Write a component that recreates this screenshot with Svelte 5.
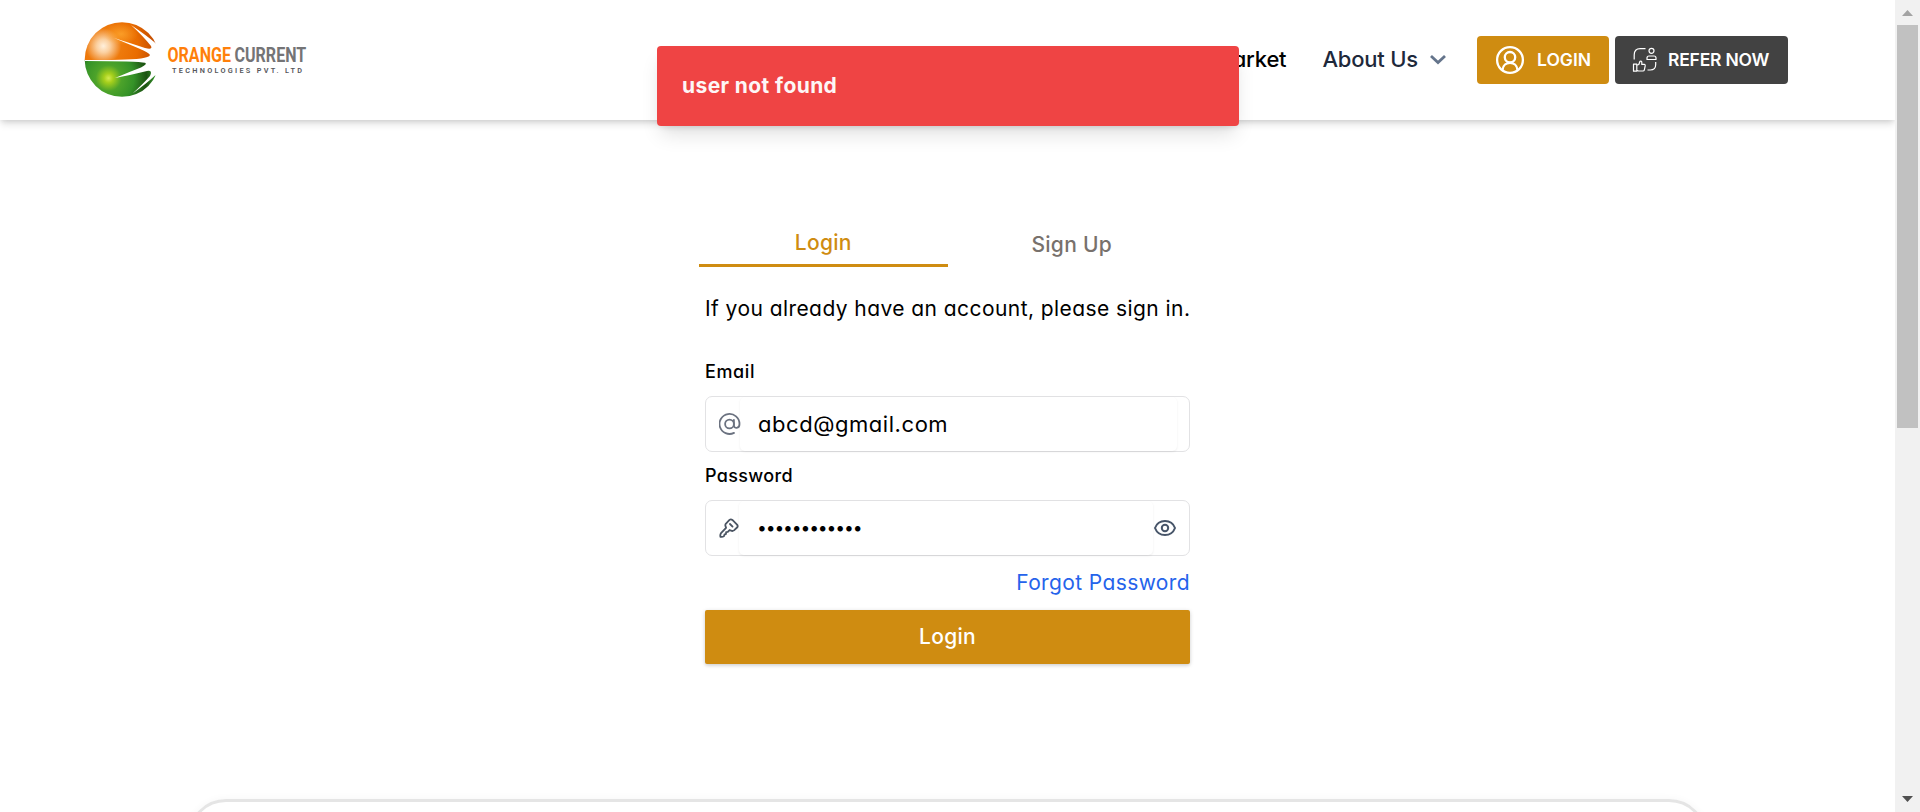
<script>
  const tabs = [
    { label: 'Login', active: true },
    { label: 'Sign Up', active: false },
  ];
  const email = 'abcd@gmail.com';
  const password = '•'.repeat(12);
</script>

<div class="window">
  <div class="page">
    <header>
      <svg class="logo" width="240" height="90" viewBox="75 15 240 90">
        <defs>
          <radialGradient id="og" cx="0.25" cy="0.32" r="0.75">
            <stop offset="0" stop-color="#fff0dc" />
            <stop offset="0.12" stop-color="#fbd0a0" />
            <stop offset="0.32" stop-color="#ee7a0c" />
            <stop offset="0.62" stop-color="#e96c00" />
            <stop offset="1" stop-color="#b84300" />
          </radialGradient>
          <radialGradient id="gg" cx="0.32" cy="0.75" r="0.62">
            <stop offset="0" stop-color="#d3ea50" />
            <stop offset="0.1" stop-color="#a5cf1c" />
            <stop offset="0.28" stop-color="#4da32a" />
            <stop offset="0.55" stop-color="#349228" />
            <stop offset="0.82" stop-color="#1c5212" />
            <stop offset="1" stop-color="#35942b" />
          </radialGradient>
          <radialGradient id="glow" cx="0.5" cy="0.5" r="0.5">
            <stop offset="0" stop-color="#ffa930" stop-opacity="0.75" />
            <stop offset="1" stop-color="#ffa930" stop-opacity="0" />
          </radialGradient>
          <clipPath id="top"><rect x="80" y="15" width="85" height="45.3" /></clipPath>
          <clipPath id="bot"><rect x="80" y="60.3" width="85" height="45" /></clipPath>
        </defs>
        <circle cx="122" cy="59.5" r="37.3" fill="url(#og)" clip-path="url(#top)" />
        <ellipse cx="121" cy="34" rx="17" ry="11" fill="url(#glow)" />
        <circle cx="122" cy="59.5" r="37.3" fill="url(#gg)" clip-path="url(#bot)" />
        <path
          fill="#fff"
          d="M85 60.1 Q125 60 141 58.4 Q149 57.5 150 55 Q149 52.5 139 48.5 Q126 43 114 38 Q130 43 145 48 Q153 50 151 46 Q143 36 131 25 Q146 35 156 43.5 L163 44 L163 78 L155 75.5 Q146 84 132.5 93.5 Q143 84 150 76 Q153 70 147 71 Q131 75 115 78 Q129 72 141 67.5 Q148 64 145 62.8 Q138 61.2 85 61 Z"
        />
        <text transform="translate(167.5 62) scale(0.772 1)" class="brand orange">ORANGE</text>
        <text transform="translate(234.5 62) scale(0.772 1)" class="brand gray">CURRENT</text>
        <text x="172" y="72.7" textLength="130" class="tagline">TECHNOLOGIES PVT. LTD</text>
      </svg>

      <nav>
        <span class="link market">Market</span>
        <span class="link about">About Us</span>
        <svg class="chevron" width="18" height="12" viewBox="0 0 18 12"><path d="M2 2l7 6.5 7-6.5" fill="none" stroke="#64748b" stroke-width="2.8" /></svg>
        <button class="btn gold">
          <svg width="30" height="30" viewBox="0 0 30 30" fill="none" stroke="#fff" stroke-width="2.3">
            <circle cx="15" cy="15" r="12.9" /><circle cx="15" cy="12.2" r="5.2" /><path d="M7.5 25c.6-9.6 14.4-9.6 15 0" />
          </svg>
          <span>LOGIN</span>
        </button>
        <button class="btn dark">
          <svg width="26" height="26" viewBox="0 0 26 26" fill="none" stroke="#fff" stroke-width="1.2" stroke-linejoin="round">
            <path d="M2.2 12.5V8q0-6.3 6-6.3H13.5M23.7 15v2.5q0 5.5-5.5 5.5H15.5" />
            <circle cx="19.5" cy="3.8" r="2.5" /><path d="M15 12.5v-1.5q0-2 2-2h5q2 0 2 2v1.5z" />
            <path d="M1.5 17.2h3.3v7H1.5zM4.8 18.2l2-.7 1.2-3.3q1.7-.6 1.8 1v2.200h2.600q1 .2.800 1.500l-.9 4.200q-.3.900-1.300.9H6.500l-1.700-.6" />
          </svg>
          <span>REFER NOW</span>
        </button>
      </nav>
    </header>

    <main>
      <div class="tabs">
        {#each tabs as tab}
          <div class="tab" class:active={tab.active}>{tab.label}</div>
        {/each}
      </div>
      <form>
        <p class="intro">If you already have an account, please sign in.</p>
        <div class="label mail">Email</div>
        <div class="field">
          <svg width="22" height="24" viewBox="1.5 0 22 24" fill="none" stroke="#6b7280" stroke-width="1.8" stroke-linecap="round">
            <circle cx="12" cy="12" r="4.4" /><path d="M16.4 7.8v5.4c0 3.8 5.6 3.8 5.6-1.2a10 10 0 1 0-5.5 8.9" />
          </svg>
          <div class="value">{email}</div>
        </div>
        <div class="label pass">Password</div>
        <div class="field secret">
          <svg width="21" height="22" viewBox="-0.5 -1 22 22" fill="none" stroke="#4b5563" stroke-width="1.9" stroke-linecap="round" stroke-linejoin="round">
            <path d="M10.5 1.5q1.5-1.2 3 .1l4.9 4.9q1.3 1.6 0 3l-3.2 3q-1.6 1.2-3.1.2l-1.5-.6-1.9 2-1.7.3-.2 1.9-1.5.4-.5 1.8q-1.8 1.3-3.8.7-.5-2.2.6-3.8l5.3-5.6-.5-1.6q-.7-1.5.4-2.9z" />
            <path d="M11 5.8l2.7 2.7" />
          </svg>
          <div class="value dots">{password}</div>
          <svg class="eye" width="24" height="18" viewBox="0 0 24 18" fill="none" stroke="#475569" stroke-width="2">
            <path d="M2 9C5.5-.3 18.5-.3 22 9 18.5 18.3 5.5 18.3 2 9z" /><circle cx="12" cy="9" r="3.2" />
          </svg>
        </div>
        <div class="forgot">Forgot Password</div>
        <button class="submit" type="button">Login</button>
      </form>
      <section class="panel"></section>
    </main>
    <div class="toast">user not found</div>
  </div>

  <div class="scrollbar">
    <svg width="25" height="25" viewBox="0 0 25 25"><path d="M7 16L12.5 10 18 16z" fill="#a3a3a3" /></svg>
    <div class="thumb"></div>
    <svg width="25" height="25" viewBox="0 0 25 25"><path d="M7 9L12.5 15 18 9z" fill="#505050" /></svg>
  </div>
</div>

<style>
  :global(body) {
    background: #fff;
  }
  .window {
    display: flex;
    width: 1920px;
    height: 812px;
    overflow: hidden;
    font-family: Inter, sans-serif;
    font-feature-settings: 'cv11';
    font-size: 21px;
    color: #000;
  }
  .page {
    position: relative;
    width: 1895px;
    height: 812px;
    overflow: hidden;
  }
  header {
    box-sizing: border-box;
    display: flex;
    height: 120px;
    padding: 0 107px 0 75px;
    align-items: center;
    justify-content: space-between;
    box-shadow: 0 5px 7.5px -1.25px rgba(0, 0, 0, 0.13), 0 2.5px 5px -1.25px rgba(0, 0, 0, 0.1);
  }
  nav {
    display: flex;
    align-items: center;
  }
  .brand {
    font: 700 20.8px Roboto, sans-serif;
  }
  .orange {
    fill: #ff7f0a;
  }
  .gray {
    fill: #747476;
  }
  .tagline {
    font: 600 7.3px Roboto, sans-serif;
    fill: #55565a;
  }
  .link {
    font-size: 22px;
    font-weight: 500;
    letter-spacing: -0.2px;
    padding-bottom: 2px;
    white-space: nowrap;
  }
  .market {
    margin-right: 36px;
  }
  .about {
    color: #1e293b;
  }
  .chevron {
    margin: 0 30px 0 11px;
  }
  .btn {
    box-sizing: border-box;
    display: flex;
    align-items: center;
    height: 48px;
    padding: 0;
    border: 0;
    border-radius: 4px;
    color: #fff;
    font: 600 17.5px Inter, sans-serif;
    white-space: nowrap;
  }
  .btn span {
    padding-bottom: 2px;
  }
  .gold {
    width: 132px;
    margin-right: 6px;
    padding-left: 18px;
    gap: 12px;
    background: #cf8c11;
    letter-spacing: 0;
  }
  .dark {
    width: 173px;
    padding-left: 17px;
    gap: 10px;
    background: #424242;
    letter-spacing: -0.2px;
  }
  main {
    display: flex;
    flex-direction: column;
    align-items: center;
    padding-top: 101px;
  }
  .tabs {
    display: flex;
    width: 497px;
  }
  .tab {
    box-sizing: border-box;
    display: flex;
    flex: 1;
    height: 46px;
    align-items: center;
    justify-content: center;
    color: #78716c;
    font-weight: 500;
    letter-spacing: 0.3px;
  }
  .active {
    border-bottom: 3px solid #cf8c11;
    color: #cf8c11;
  }
  form {
    display: flex;
    flex-direction: column;
    width: 485px;
    padding-top: 26px;
  }
  .intro {
    margin: 0 0 33px;
    line-height: 32px;
    letter-spacing: 0.43px;
    white-space: nowrap;
  }
  .label {
    height: 28px;
    margin-bottom: 10px;
    font-size: 18px;
    font-weight: 500;
    line-height: 28px;
  }
  .mail {
    letter-spacing: 0.6px;
  }
  .pass {
    margin-top: 10px;
    letter-spacing: 0.35px;
  }
  .field {
    box-sizing: border-box;
    display: flex;
    height: 56px;
    align-items: center;
    padding: 0 12px 0 13px;
    border: 1px solid #e2e2e4;
    border-radius: 7px;
  }
  .value {
    flex: 1;
    height: 54px;
    margin-left: -1px;
    padding-left: 18px;
    border-radius: 5px;
    box-shadow: 0 1px 2.5px rgba(0, 0, 0, 0.07);
    font-size: 22px;
    line-height: 54px;
    letter-spacing: 0.55px;
  }
  .dots {
    font-size: 17.5px;
    letter-spacing: -1.15px;
  }
  .forgot {
    margin: 11px 0 11px;
    color: #2563eb;
    line-height: 32px;
    letter-spacing: 0.38px;
    text-align: right;
  }
  .submit {
    height: 54px;
    padding: 0 0 2px;
    border: 0;
    border-radius: 2px;
    background: #cf8c11;
    box-shadow: 0 1px 4px rgba(0, 0, 0, 0.16), 0 2px 3px rgba(0, 0, 0, 0.06);
    color: #fff;
    font: inherit;
    font-feature-settings: inherit;
    font-weight: 500;
    letter-spacing: 0.3px;
  }
  .panel {
    box-sizing: border-box;
    width: 1519px;
    height: 120px;
    flex: none;
    margin-top: 135px;
    border: 3px solid #e5e5e5;
    border-radius: 38px;
    box-shadow: 0 0 8px rgba(0, 0, 0, 0.04);
  }
  .toast {
    position: absolute;
    left: 657px;
    top: 45.5px;
    box-sizing: border-box;
    width: 582px;
    height: 80px;
    padding-left: 25px;
    border-radius: 4px;
    background: #ef4444;
    box-shadow: 0 12px 19px -4px rgba(0, 0, 0, 0.12), 0 5px 8px -5px rgba(0, 0, 0, 0.12);
    color: #fdf6f6;
    font-weight: 700;
    line-height: 79px;
    letter-spacing: 0.4px;
  }
  .scrollbar {
    display: flex;
    flex-direction: column;
    width: 25px;
    height: 812px;
    justify-content: space-between;
    background: #f1f1f1;
  }
  .thumb {
    width: 21px;
    height: 403px;
    margin: 0 auto auto;
    background: #c1c1c1;
  }
</style>
